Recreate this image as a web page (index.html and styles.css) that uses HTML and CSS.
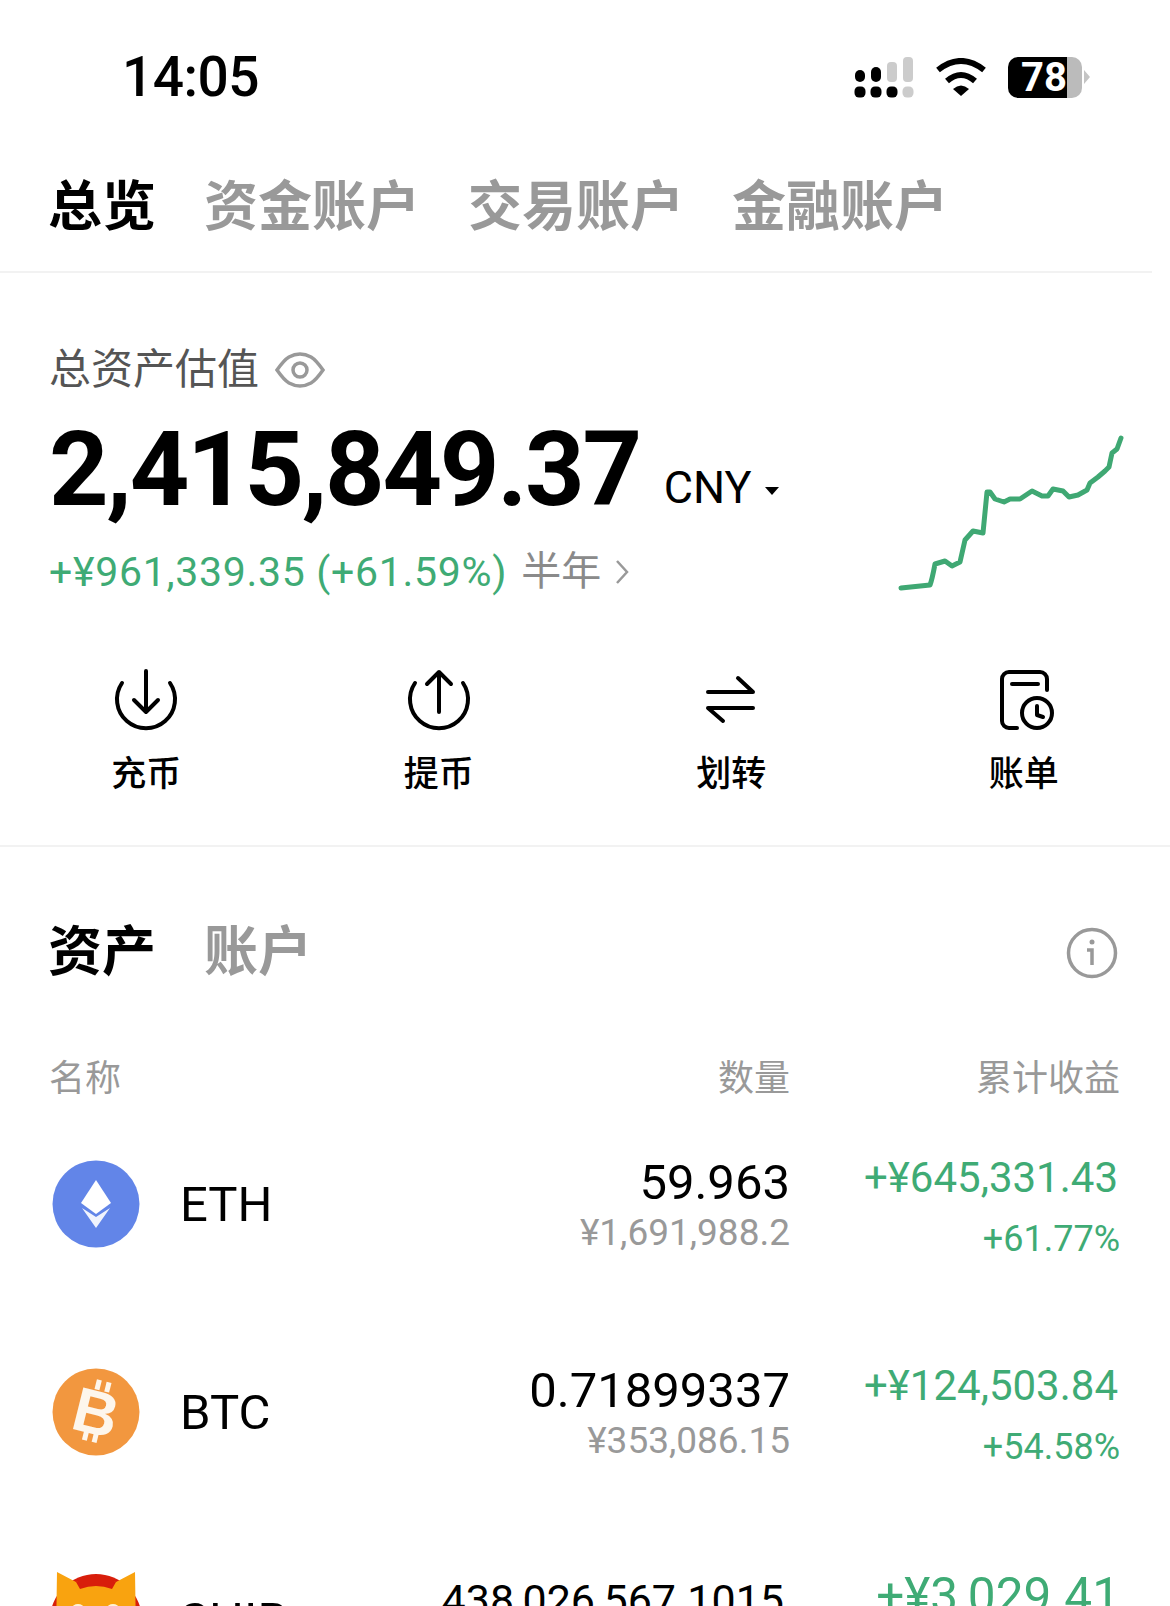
FILE: index.html
```html
<!DOCTYPE html>
<html lang="zh-CN">
<head>
  <meta charset="UTF-8" />
  <meta name="viewport" content="width=device-width, initial-scale=1.0" />
  <link rel="stylesheet" href="styles.css">
  <title>总览</title>
</head>
<body>
  <div class="status">
    <div class="time">14:05</div>
    <div class="status-icons">
      <svg class="signal" width="60" height="46" viewBox="0 0 60 46">
        <rect x="1" y="14" width="10" height="12" rx="5" fill="#000"/>
        <rect x="17" y="11" width="10" height="15" rx="5" fill="#000"/>
        <rect x="33" y="6" width="10" height="20" rx="4" fill="#ccc"/>
        <rect x="49" y="1" width="10" height="25" rx="4" fill="#ccc"/>
        <rect x="0.5" y="30.5" width="11" height="11" rx="4.5" fill="#000"/>
        <rect x="16.5" y="30.5" width="11" height="11" rx="4.5" fill="#000"/>
        <rect x="32.5" y="30.5" width="11" height="11" rx="4.5" fill="#000"/>
        <rect x="48.5" y="30.5" width="11" height="11" rx="4.5" fill="#ccc"/>
      </svg>
      <svg class="wifi" width="50" height="38" viewBox="0 0 50 38">
        <path d="M2 12 Q25 -6 48 12" fill="none" stroke="#000" stroke-width="6"/>
        <path d="M11 23 Q25 11 39 23" fill="none" stroke="#000" stroke-width="6"/>
        <path d="M17 31 Q25 24 33 31 L25 38 Z" fill="#000"/>
      </svg>
      <div class="battery">78</div>
      <div class="battery-nub"></div>
    </div>
  </div>

  <nav class="tabs">
    <span class="tab active">总览</span>
    <span class="tab">资金账户</span>
    <span class="tab">交易账户</span>
    <span class="tab">金融账户</span>
  </nav>

  <section class="hero">
    <div class="hero-top">
      <div class="hero-left">
        <div class="hero-label">
          总资产估值
          <svg width="50" height="36" viewBox="0 0 50 36">
            <path d="M2 18 Q9 8 14 5 Q25 -1 36 5 Q41 8 48 18 Q41 28 36 31 Q25 37 14 31 Q9 28 2 18 Z" fill="none" stroke="#999" stroke-width="3.5"/>
            <circle cx="25" cy="18" r="7" fill="none" stroke="#999" stroke-width="3.5"/>
          </svg>
        </div>
        <div class="balance">
          <span class="balance-num">2,415,849.37</span>
          <span class="balance-cur">CNY</span>
          <span class="caret"></span>
        </div>
        <div class="change">
          <span class="up">+¥961,339.35 (+61.59%)</span>
          <span class="period">半年</span>
          <svg width="14" height="26" viewBox="0 0 14 26"><path d="M2 2 L12 13 L2 24" fill="none" stroke="#999" stroke-width="2.5"/></svg>
        </div>
      </div>
      <svg class="spark" width="230" height="162" viewBox="895 430 230 162">
        <path d="M901 586 L930 583 Q932 578 935 562 L945 559 L952 564 L960 560 L965 538 L973 529 L983 531 L987 490 L990 490 L995 497 L1004 500 L1010 497 L1020 497 L1032 489 L1042 494 L1048 494 L1053 487 L1063 489 L1069 495 L1078 493 L1087 488 L1090 481 L1098 475 L1105 469 L1109 465 L1112 451 L1117 447 L1121 436" fill="none" stroke="#3fa873" stroke-width="5" stroke-linejoin="round" stroke-linecap="round"/>
      </svg>
    </div>
    <div class="actions">
      <div class="action">
        <svg width="70" height="70" viewBox="0 0 70 70">
          <path d="M11 18 A29 29 0 1 0 59 18" />
          <path d="M35 6 V47 M23 35 L35 47 L47 35" />
        </svg>
        <span>充币</span>
      </div>
      <div class="action">
        <svg width="70" height="70" viewBox="0 0 70 70">
          <path d="M11 18 A29 29 0 1 0 59 18" />
          <path d="M35 47 V7 M23 19 L35 7 L47 19" />
        </svg>
        <span>提币</span>
      </div>
      <div class="action">
        <svg width="70" height="70" viewBox="0 0 70 70">
          <path d="M12 27 H57 L42 13" />
          <path d="M57 43 H12 L27 56" />
        </svg>
        <span>划转</span>
      </div>
      <div class="action">
        <svg width="70" height="70" viewBox="0 0 70 70">
          <path d="M28 63 H20 a7 7 0 0 1 -7 -7 V14 a7 7 0 0 1 7 -7 H51 a7 7 0 0 1 7 7 V25" />
          <path d="M23 19 H49" />
          <circle cx="48" cy="48" r="15" />
          <path d="M48 41 V50 L54 52" />
        </svg>
        <span>账单</span>
      </div>
    </div>
  </section>

  <section class="assets">
    <div class="sub-tabs">
      <span class="tab active">资产</span>
      <span class="tab">账户</span>
      <svg class="info" width="52" height="52" viewBox="0 0 52 52">
        <circle cx="26" cy="26" r="23.5" fill="none" stroke="#999" stroke-width="3.5"/>
        <circle cx="26" cy="15" r="2.5" fill="#999"/>
        <path d="M21 23 H26 V38" fill="none" stroke="#999" stroke-width="3.5"/>
      </svg>
    </div>

    <div class="grid-row head">
      <span>名称</span>
      <span class="right">数量</span>
      <span class="right">累计收益</span>
    </div>

    <div class="grid-row coin">
      <div class="coin-name">
        <svg class="coin-icon" width="88" height="88" viewBox="0 0 88 88">
          <circle cx="44" cy="44" r="43.5" fill="#6285e8"/>
          <path d="M44 20 L59 43 L44 54 L29 43 Z" fill="#fff"/>
          <path d="M30 48 L44 57 L58 48 L44 68 Z" fill="#f0f3fd"/>
        </svg>
        ETH
      </div>
      <div class="right">
        <div class="qty">59.963</div>
        <div class="fiat">¥1,691,988.2</div>
      </div>
      <div class="right up gain-col">
        <div class="gain">+¥645,331.43</div>
        <div class="pct">+61.77%</div>
      </div>
    </div>

    <div class="grid-row coin">
      <div class="coin-name">
        <svg class="coin-icon" width="88" height="88" viewBox="0 0 88 88">
          <circle cx="44" cy="44" r="43.5" fill="#f2973f"/>
          <g transform="rotate(14 44 44)" fill="#fdf6ec">
            <rect x="37" y="12" width="5" height="10"/>
            <rect x="47" y="12" width="5" height="10"/>
            <rect x="37" y="64" width="5" height="10"/>
            <rect x="47" y="64" width="5" height="10"/>
            <text class="btc-b" x="44" y="66" text-anchor="middle">B</text>
          </g>
        </svg>
        BTC
      </div>
      <div class="right">
        <div class="qty">0.71899337</div>
        <div class="fiat">¥353,086.15</div>
      </div>
      <div class="right up gain-col">
        <div class="gain">+¥124,503.84</div>
        <div class="pct">+54.58%</div>
      </div>
    </div>

    <div class="grid-row coin">
      <div class="coin-name">
        <svg class="coin-icon" width="88" height="88" viewBox="0 0 88 88">
          <path d="M-2 44 A46 46 0 0 1 90 44 L90 88 L-2 88 Z" fill="#d81e0b"/>
          <path d="M5 -4 L24 6 Q44 -1 64 6 L83 -4 L84 60 L44 88 L4 60 Z" fill="#f9a30f"/>
          <path d="M24 6 Q44 -6 64 6 L60 13 Q44 7 28 13 Z" fill="#d81e0b"/>
          <ellipse cx="26" cy="32" rx="6" ry="4" fill="#fff3d6"/>
          <ellipse cx="61" cy="32" rx="6" ry="4" fill="#fff3d6"/>
        </svg>
        SHIB
      </div>
      <div class="right cut-qty">
        <div class="qty small">438,026,567.1015</div>
      </div>
      <div class="right up cut-gain">
        <div class="gain big">+¥3,029.41</div>
      </div>
    </div>
  </section>
</body>
</html>
```

FILE: styles.css
```css
html, body {
  margin: 0;
  padding: 0;
  background: #fff;
}
body {
  width: 1170px;
  height: 1606px;
  overflow: hidden;
  font-family: Roboto, "Noto Sans CJK SC", sans-serif;
  color: #000;
}

/* status bar */
.status {
  height: 154px;
  display: flex;
  align-items: center;
  justify-content: space-between;
  padding: 0 80px 0 122px;
  box-sizing: border-box;
}
.time {
  font-size: 55px;
  font-weight: 500;
  letter-spacing: -0.5px;
}
.status-icons {
  display: flex;
  align-items: center;
}
.signal {
  margin: 4px 22px 0 0;
}
.wifi {
  margin-right: 22px;
}
.battery {
  width: 74px;
  height: 41px;
  border-radius: 10px;
  background: linear-gradient(to right, #000 59px, #bbb 59px);
  color: #fff;
  font-size: 40px;
  font-weight: 700;
  line-height: 41px;
  padding-left: 13px;
  box-sizing: border-box;
}
.battery-nub {
  width: 0;
  height: 0;
  margin-left: 2px;
  border-left: 6px solid #c4c4c4;
  border-top: 7px solid transparent;
  border-bottom: 7px solid transparent;
}

/* top tabs */
.tabs {
  width: 1152px;
  height: 119px;
  box-sizing: border-box;
  border-bottom: 2px solid #f2f2f2;
  padding: 0 0 10px 48px;
  display: flex;
  align-items: center;
  gap: 48px;
}
.tab {
  font-size: 54px;
  font-weight: 700;
  line-height: 60px;
  color: #999;
}
.tab.active {
  color: #000;
}

/* hero */
.hero {
  border-bottom: 2px solid #f2f2f2;
  height: 574px;
  box-sizing: border-box;
}
.hero-top {
  display: flex;
  justify-content: space-between;
  align-items: flex-end;
  padding: 72px 45px 0 49px;
}
.spark {
  margin-bottom: 3px;
}
.hero-label {
  display: flex;
  align-items: center;
  gap: 16px;
  font-size: 42px;
  line-height: 50px;
  color: #555;
}
.balance {
  margin-top: 20px;
  height: 130px;
  line-height: 110px;
  white-space: nowrap;
}
.balance-num {
  font-size: 104px;
  font-weight: 700;
  letter-spacing: -2.3px;
}
.balance-cur {
  font-size: 45px;
  margin-left: 20px;
  vertical-align: 2px;
}
.caret {
  display: inline-block;
  width: 0;
  height: 0;
  margin-left: 9px;
  border-top: 8px solid #000;
  border-left: 7px solid transparent;
  border-right: 7px solid transparent;
  vertical-align: 10px;
}
.change {
  display: flex;
  align-items: center;
  margin-top: 2px;
  font-size: 41px;
  line-height: 50px;
}
.up {
  color: #3fab75;
}
.change .up {
  letter-spacing: 0.7px;
}
.period {
  color: #8a8a8a;
  margin-left: 14px;
  font-size: 40px;
}
.change svg {
  margin-left: 14px;
}

/* action buttons */
.actions {
  display: grid;
  grid-template-columns: repeat(4, 1fr);
  margin-top: 68px;
}
.action {
  display: flex;
  flex-direction: column;
  align-items: center;
  font-size: 35px;
  font-weight: 500;
  line-height: 40px;
}
.action svg {
  fill: none;
  stroke: #000;
  stroke-width: 4;
  stroke-linecap: round;
  stroke-linejoin: round;
  margin-bottom: 20px;
}

/* asset list */
.assets {
  padding: 0 50px;
}
.sub-tabs {
  display: flex;
  align-items: center;
  gap: 48px;
  padding-top: 76px;
  margin-left: -2px;
}
.info {
  margin-left: auto;
  margin-right: 2px;
}
.grid-row {
  display: grid;
  grid-template-columns: 1fr 400px 330px;
}
.head {
  margin: 76px 0 1px -1px;
  font-size: 36px;
  line-height: 40px;
  color: #999;
}
.right {
  text-align: right;
}
.coin {
  height: 208px;
  align-items: center;
}
.coin-name {
  display: flex;
  align-items: center;
  gap: 40px;
  font-size: 49px;
  margin-left: 2px;
}
.coin-icon {
  overflow: visible;
}
.btc-b {
  font-size: 62px;
  font-weight: 700;
  font-family: "Liberation Sans", sans-serif;
}
.qty {
  font-size: 49px;
  line-height: 56px;
}
.qty.small {
  font-size: 43px;
  margin-right: 6px;
}
.fiat {
  font-size: 37px;
  line-height: 40px;
  color: #999;
  margin-top: 2px;
}
.gain-col {
  margin-top: 5px;
}
.gain {
  font-size: 42px;
  line-height: 50px;
  margin-right: 2px;
}
.gain.big {
  font-size: 49.5px;
  margin-right: 0;
}
.pct {
  font-size: 36px;
  line-height: 44px;
  margin-top: 14px;
}
/* last row is cut by the fold, so hold its numbers to the top of the row */
.cut-qty {
  align-self: start;
  margin-top: 56px;
}
.cut-gain {
  align-self: start;
  margin-top: 55px;
}
```
